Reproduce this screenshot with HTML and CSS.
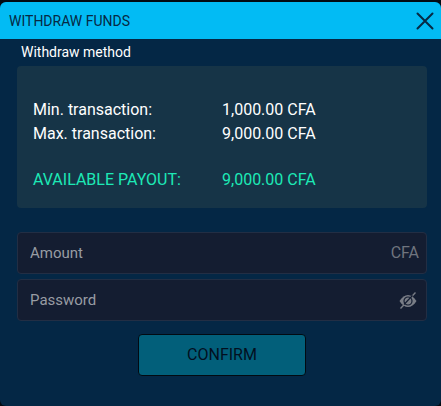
FILE: index.html
```html
<!DOCTYPE html>
<html lang="en">
<head>
    <meta charset="UTF-8">
    <meta name="viewport" content="width=device-width, initial-scale=1.0">
    <title>Withdraw Funds</title>
    <link rel="stylesheet" href="styles.css">
</head>
<body>
    <div class="modal">
        <div class="modal-header">
            <h1>WITHDRAW FUNDS</h1>
            <button type="button" class="close-button" aria-label="Close">
                <svg width="18" height="18" viewBox="0 0 18 18">
                    <path d="M1.5 1.5L16.5 16.5M16.5 1.5L1.5 16.5" fill="none" stroke="#062944" stroke-width="2" stroke-linecap="round"/>
                </svg>
            </button>
        </div>
        <div class="modal-content">
            <h2>Withdraw method</h2>
            <dl class="limits">
                <dt>Min. transaction:</dt>
                <dd>1,000.00 CFA</dd>
                <dt>Max. transaction:</dt>
                <dd>9,000.00 CFA</dd>
                <dt class="payout">AVAILABLE PAYOUT:</dt>
                <dd class="payout">9,000.00 CFA</dd>
            </dl>
            <form class="withdraw-form">
                <div class="field">
                    <input type="text" id="amount" name="amount" placeholder="Amount" aria-label="Amount">
                    <label for="amount" class="currency">CFA</label>
                </div>
                <div class="field">
                    <input type="password" id="password" name="password" placeholder="Password" aria-label="Password">
                    <button type="button" class="toggle-password" aria-label="Show password">
                        <svg width="20" height="18" viewBox="0 0 20 18">
                            <path d="M0.5 10C3 6 6 4 9 4S15 6 17.5 10C15 14 12 16 9 16S3 14 0.5 10Z" fill="#797d86"/>
                            <path d="M1.5 17.5L16.5 1.5" stroke="#797d86" stroke-width="1.3"/>
                            <circle cx="9" cy="10" r="4" fill="none" stroke="#141d31" stroke-width="1.2"/>
                            <path d="M5 13.5L13.5 4.5" stroke="#141d31" stroke-width="1.2"/>
                        </svg>
                    </button>
                </div>
                <button type="submit" class="confirm-button">CONFIRM</button>
            </form>
        </div>
    </div>
</body>
</html>
```
FILE: styles.css
```css
* {
    box-sizing: border-box;
}

body {
    font-family: Roboto, Arial, sans-serif;
    font-size: 16px;
    line-height: 24px;
    background-color: #020a12;
    color: white;
    margin: 0;
    padding-top: 2px;
}

button, input {
    font-family: inherit;
    font-size: 16px;
}

.modal {
    display: flex;
    flex-direction: column;
    min-height: calc(100vh - 2px);
    background-color: #042745;
    border-radius: 6px;
    overflow: hidden;
}

.modal-header {
    display: flex;
    align-items: center;
    justify-content: space-between;
    height: 37px;
    padding: 0 7px 0 9px;
    background-color: #02bbf4;
}

.modal-header h1 {
    margin: 0;
    color: #062944;
    font-size: 14px;
    font-weight: 400;
}

.close-button,
.toggle-password {
    display: flex;
    padding: 0;
    border: none;
    background: none;
    cursor: pointer;
}

.modal-content {
    padding: 3px 14px 24px 17px;
}

.modal-content h2 {
    margin: 0 4px 4px;
    font-size: 14px;
    font-weight: 400;
    line-height: 20px;
}

.limits {
    display: grid;
    grid-template-columns: 1fr 1fr;
    margin: 0 0 24px;
    padding: 32px 16px 16px;
    background-color: #163447;
    border-radius: 4px;
}

.limits dd {
    margin: 0;
}

.limits .payout {
    margin-top: 22px;
    color: #1de9b6;
}

.withdraw-form {
    display: flex;
    flex-direction: column;
    gap: 5px;
}

.field {
    display: flex;
    align-items: center;
    height: 42px;
    padding: 0 7px 0 12px;
    background-color: #141d31;
    border: 1px solid #222e44;
    border-radius: 4px;
}

.field input {
    flex: 1;
    min-width: 0;
    padding: 0;
    border: none;
    outline: none;
    background: none;
    color: white;
    font-size: 15px;
}

.field input::placeholder {
    color: #989ca3;
}

.currency {
    color: #6f747e;
}

.confirm-button {
    align-self: center;
    width: 168px;
    height: 42px;
    margin-top: 8px;
    padding: 0 0 2px;
    border: 1px solid #020a12;
    border-radius: 4px;
    background-color: #025f7a;
    color: #020f1f;
    cursor: pointer;
}
```
